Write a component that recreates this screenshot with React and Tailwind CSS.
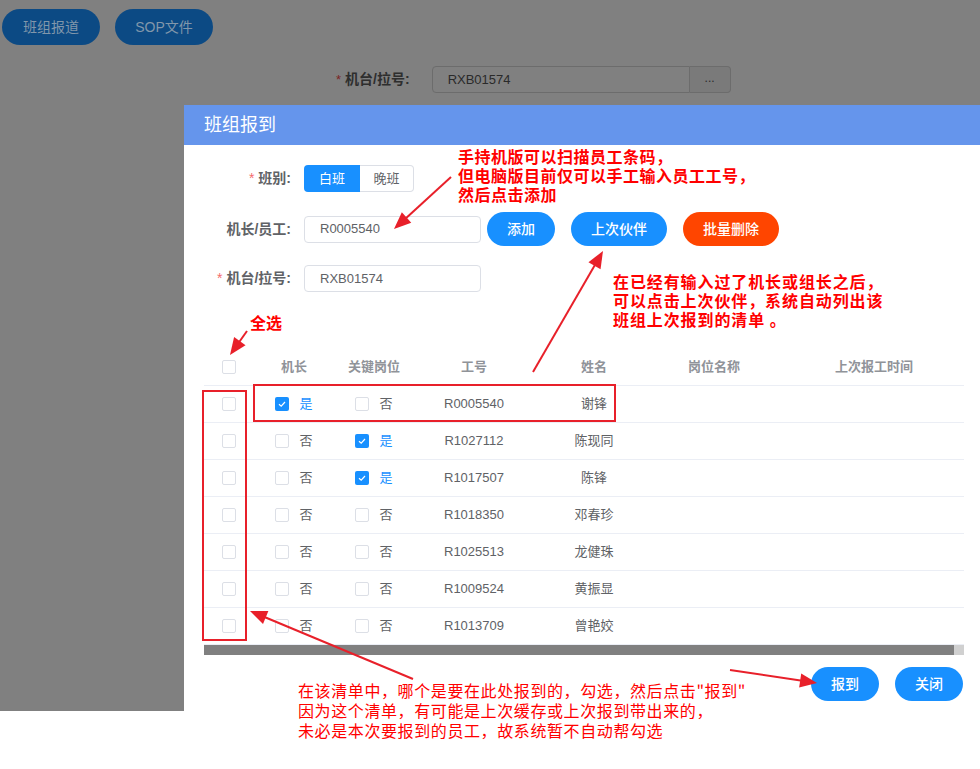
import React from "react";

const F = "font-['Liberation_Sans','Noto_Sans_CJK_SC',sans-serif]";

function Check({ checked }) {
  return checked ? (
    <span className="inline-flex w-[14px] h-[14px] rounded-[2px] bg-[#1890ff] items-center justify-center">
      <svg width="10" height="10" viewBox="0 0 10 10">
        <path d="M2 5.2 L4.2 7.2 L8 3" fill="none" stroke="#fff" strokeWidth="1.2" />
      </svg>
    </span>
  ) : (
    <span className="inline-block w-[14px] h-[14px] rounded-[2px] border border-[#dcdfe6] bg-white" />
  );
}

function YesNo({ v }) {
  return (
    <div className="flex items-center justify-center gap-[10px]">
      <Check checked={v} />
      <span className={v ? "text-[#1890ff] text-[13px]" : "text-[#606266] text-[13px]"}>{v ? "是" : "否"}</span>
    </div>
  );
}

const rows = [
  ["R0005540", "谢锋", true, false],
  ["R1027112", "陈现同", false, true],
  ["R1017507", "陈锋", false, true],
  ["R1018350", "邓春珍", false, false],
  ["R1025513", "龙健珠", false, false],
  ["R1009524", "黄振显", false, false],
  ["R1013709", "曾艳姣", false, false],
];

const cols = "grid grid-cols-[50px_80px_80px_120px_120px_120px_200px] w-[770px]";

function Arrow({ x1, y1, x2, y2 }) {
  const dx = x2 - x1, dy = y2 - y1;
  const len = Math.sqrt(dx * dx + dy * dy);
  const ux = dx / len, uy = dy / len;
  const L = 17, W = 7;
  const bx = x2 - ux * L, by = y2 - uy * L;
  const p = `${x2},${y2} ${bx - uy * W},${by + ux * W} ${bx + uy * W},${by - ux * W}`;
  return (
    <g>
      <line x1={x1} y1={y1} x2={bx + ux * 2} y2={by + uy * 2} stroke="#e8202a" strokeWidth="2" />
      <polygon points={p} fill="#e8202a" />
    </g>
  );
}

export default function App() {
  return (
    <div className={`relative w-[980px] h-[769px] bg-white overflow-hidden ${F}`}>
      {/* masked background page */}
      <div className="h-[711px] w-[184px] bg-[#808080] absolute left-0 top-0" />
      <div className="h-[105px] w-full bg-[#808080] relative">
        <div className="flex gap-[15px] pl-[2px] pt-[9px]">
          <div className="w-[98px] h-[36px] rounded-full bg-[#0c4a84] flex items-center justify-center text-[14px] text-[#8197ab]">班组报道</div>
          <div className="w-[98px] h-[36px] rounded-full bg-[#0c4a84] flex items-center justify-center text-[14px] text-[#8197ab]">SOP文件</div>
        </div>
        <div className="flex items-center mt-[21px] pl-[336px]">
          <span className="text-[#7a2424] text-[13px] mr-[4px]">*</span>
          <span className="text-[14px] font-bold text-[#2e2e2e]">机台/拉号:</span>
          <div className="ml-[22px] flex h-[27px]">
            <div className="w-[258px] h-full border border-[#6c6c6c] rounded-l-[4px] flex items-center pl-[15px] text-[13px] text-[#2a2a2a]">RXB01574</div>
            <div className="w-[41px] h-full border border-l-0 border-[#6c6c6c] rounded-r-[4px] bg-[#7a7a7a] flex items-center justify-center text-[12px] text-[#2a2a2a] leading-none pb-[4px]">...</div>
          </div>
        </div>
      </div>

      {/* dialog */}
      <div className="absolute left-[184px] top-[105px] w-[796px] h-[664px] bg-white">
        <div className="h-[40px] bg-[#6595ec] flex items-center pl-[20px] text-[18px] text-white">班组报到</div>
        <div className="pt-[20px]">
          <div className="flex items-center h-[27px]">
            <div className="w-[120px] pr-[13px] text-right text-[14px] font-bold text-[#606266]"><span className="text-[#f56c6c] mr-[4px] font-normal">*</span>班别:</div>
            <div className="flex h-[27px] text-[13px]">
              <div className="w-[56px] bg-[#1890ff] text-white rounded-l-[4px] flex items-center justify-center">白班</div>
              <div className="w-[54px] border border-l-0 border-[#dcdfe6] text-[#606266] rounded-r-[4px] flex items-center justify-center">晚班</div>
            </div>
          </div>
          <div className="flex items-center h-[34px] mt-[20px]">
            <div className="w-[120px] pr-[13px] text-right text-[14px] font-bold text-[#606266]">机长/员工:</div>
            <div className="w-[177px] h-[27px] border border-[#dcdfe6] rounded-[4px] flex items-center pl-[15px] text-[13px] text-[#606266]">R0005540</div>
            <div className="ml-[6px] w-[68px] h-[34px] rounded-full bg-[#1890ff] text-white text-[14px] font-medium flex items-center justify-center">添加</div>
            <div className="ml-[16px] w-[96px] h-[34px] rounded-full bg-[#1890ff] text-white text-[14px] font-medium flex items-center justify-center">上次伙伴</div>
            <div className="ml-[16px] w-[96px] h-[34px] rounded-full bg-[#ff4500] text-white text-[14px] font-medium flex items-center justify-center">批量删除</div>
          </div>
          <div className="flex items-center h-[27px] mt-[19px]">
            <div className="w-[120px] pr-[13px] text-right text-[14px] font-bold text-[#606266]"><span className="text-[#f56c6c] mr-[4px] font-normal">*</span>机台/拉号:</div>
            <div className="w-[177px] h-[27px] border border-[#dcdfe6] rounded-[4px] flex items-center pl-[15px] text-[13px] text-[#606266]">RXB01574</div>
          </div>

          {/* table */}
          <div className="ml-[20px] mt-[57px] w-[760px] overflow-hidden">
            <div className={`${cols} h-[37px] items-center border-b border-[#ebeef5] text-[13px] font-bold text-[#909399]`}>
              <div className="flex justify-center"><Check /></div>
              <div className="text-center">机长</div>
              <div className="text-center">关键岗位</div>
              <div className="text-center">工号</div>
              <div className="text-center">姓名</div>
              <div className="text-center">岗位名称</div>
              <div className="text-center">上次报工时间</div>
            </div>
            {rows.map((r) => (
              <div key={r[0]} className={`${cols} h-[37px] items-center border-b border-[#ebeef5] text-[13px] text-[#606266]`}>
                <div className="flex justify-center"><Check /></div>
                <YesNo v={r[2]} />
                <YesNo v={r[3]} />
                <div className="text-center">{r[0]}</div>
                <div className="text-center">{r[1]}</div>
                <div />
                <div />
              </div>
            ))}
            <div className="flex h-[10px]">
              <div className="w-[750px] bg-[#808080]" />
              <div className="flex-1 bg-[#d0d0d0]" />
            </div>
          </div>

          <div className="flex justify-end gap-[16px] pr-[17px] mt-[12px]">
            <div className="w-[68px] h-[34px] rounded-full bg-[#1890ff] text-white text-[14px] font-medium flex items-center justify-center">报到</div>
            <div className="w-[68px] h-[34px] rounded-full bg-[#1890ff] text-white text-[14px] font-medium flex items-center justify-center">关闭</div>
          </div>
        </div>
      </div>

      {/* annotation boxes */}
      <div className="absolute left-[253px] top-[384px] w-[363px] h-[38px] border-2 border-[#e8202a]" />
      <div className="absolute left-[202px] top-[390px] w-[45px] h-[251px] border-2 border-[#e8202a]" />

      {/* annotation texts */}
      <div className="absolute left-[458px] top-[147px] text-[16px] leading-[19px] tracking-[0.5px] font-bold text-[#ff0000] font-['Noto_Sans_CJK_SC',sans-serif]">
        <div>手持机版可以扫描员工条码，</div>
        <div>但电脑版目前仅可以手工输入员工工号，</div>
        <div>然后点击添加</div>
      </div>
      <div className="absolute left-[613px] top-[272px] text-[16px] leading-[19px] tracking-[0.9px] font-bold text-[#ff0000] font-['Noto_Sans_CJK_SC',sans-serif]">
        <div>在已经有输入过了机长或组长之后，</div>
        <div>可以点击上次伙伴，系统自动列出该</div>
        <div>班组上次报到的清单 。</div>
      </div>
      <div className="absolute left-[250px] top-[312px] text-[16px] leading-[20px] font-bold text-[#ff0000] font-['Noto_Sans_CJK_SC',sans-serif]">全选</div>
      <div className="absolute left-[298px] top-[680px] text-[16px] leading-[20px] tracking-[0.6px] text-[#ff0000] font-['Noto_Sans_CJK_SC',sans-serif]">
        <div>在该清单中，哪个是要在此处报到的，勾选，然后点击"报到"</div>
        <div>因为这个清单，有可能是上次缓存或上次报到带出来的，</div>
        <div>未必是本次要报到的员工，故系统暂不自动帮勾选</div>
      </div>

      {/* arrows */}
      <svg className="absolute left-0 top-0 pointer-events-none" width="980" height="769">
        <Arrow x1={451} y1={177} x2={394} y2={229} />
        <Arrow x1={533} y1={372} x2={603} y2={251} />
        <Arrow x1={247} y1={331} x2={230} y2={355} />
        <Arrow x1={413} y1={679} x2={250} y2={611} />
        <Arrow x1={730} y1={670} x2={817} y2={683} />
      </svg>
    </div>
  );
}
